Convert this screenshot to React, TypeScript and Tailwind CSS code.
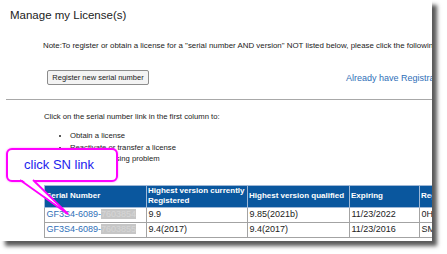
import React from 'react';

const rows = [
  { sn: 'GF3S4-6089-', hidden: '7603854', reg: '9.9', qual: '9.85(2021b)', exp: '11/23/2022', re: '0HBK' },
  { sn: 'GF3S4-6089-', hidden: '7603855', reg: '9.4(2017)', qual: '9.4(2017)', exp: '11/23/2016', re: 'SMPL' },
];

function Callout() {
  return (
    <div className="absolute left-0 top-0 w-[120px] h-[220px] pointer-events-none">
      <div className="absolute left-[6px] top-[148px] w-[112px] h-[34px] rounded-[6px] border-2 border-[#ff00ff] bg-white flex items-center pl-[16px] shadow-[0_0_2px_rgba(255,0,255,0.5)]">
        <span className="text-[13px] leading-[16px] text-[#2222ee]">click SN link</span>
      </div>
      <svg className="absolute left-0 top-0" width="120" height="220" viewBox="0 0 120 220">
        <polygon points="21,179 32,179 68,214" fill="white" />
        <line x1="20" y1="180" x2="68" y2="214" stroke="#ff00ff" strokeWidth="1.8" />
        <line x1="33" y1="180" x2="68" y2="214" stroke="#ff00ff" strokeWidth="1.8" />
      </svg>
    </div>
  );
}

export default function App() {
  return (
    <div className="w-[447px] h-[254px] bg-white overflow-hidden font-['Liberation_Sans',Arial,sans-serif]">
      <div className="relative w-[432px] h-[241px] bg-white overflow-hidden shadow-[5px_5px_4px_rgba(0,0,0,0.65)] text-[#222]">
        <h1 className="pl-[10px] pt-[7px] text-[11.5px] leading-[16px] text-[#222]">Manage my License(s)</h1>

        <p className="ml-[43px] mt-[18px] text-[7.9px] leading-[10px] whitespace-nowrap">
          Note:To register or obtain a license for a "serial number AND version" NOT listed below, please click the following buttons.
        </p>

        <div className="flex items-center ml-[47px] mt-[19px] h-[15px]">
          <button className="flex-none h-[15px] w-[102px] border border-[#8c8c8c] rounded-[2px] bg-[#f3f3f3] text-[7.5px] leading-[13px] text-[#222]">
            Register new serial number
          </button>
          <a className="flex-none ml-[197px] text-[9px] leading-[12px] text-[#2f6fb8] whitespace-nowrap">
            Already have Registration Code?
          </a>
        </div>

        <div className="ml-[6px] mt-[14px] h-px bg-[#a8a8a8]" />

        <p className="ml-[44px] mt-[12px] text-[7.7px] leading-[10px] whitespace-nowrap">
          Click on the serial number link in the first column to:
        </p>
        <ul className="ml-[70px] mt-[8px] list-disc marker:text-[#222] text-[7.7px] leading-[11.5px] whitespace-nowrap">
          <li>Obtain a license</li>
          <li>Reactivate or transfer a license</li>
          <li>Resolve licensing problem</li>
        </ul>

        <table className="ml-[44px] mt-[20px] table-fixed border-collapse w-[470px]">
          <colgroup>
            <col className="w-[102px]" />
            <col className="w-[101px]" />
            <col className="w-[102px]" />
            <col className="w-[70px]" />
            <col className="w-[95px]" />
          </colgroup>
          <thead>
            <tr className="h-[22px] bg-[#0a579e] text-white text-[8px] leading-[10px] font-bold text-left">
              <th className="pl-[1px] border border-[#9fb8d6] align-middle font-bold">Serial Number</th>
              <th className="pl-[1px] border border-[#9fb8d6] align-middle font-bold">Highest version currently Registered</th>
              <th className="pl-[1px] border border-[#9fb8d6] align-middle font-bold">Highest version qualified</th>
              <th className="pl-[1px] border border-[#9fb8d6] align-middle font-bold">Expiring</th>
              <th className="pl-[1px] border border-[#9fb8d6] align-middle font-bold">Registration Code</th>
            </tr>
          </thead>
          <tbody>
            {rows.map((r) => (
              <tr key={r.hidden} className="h-[15px] text-[9px] leading-[11px] text-[#222]">
                <td className="pl-[1.5px] border border-[#a3a3a3] whitespace-nowrap">
                  <span className="text-[#2f6fb8]">{r.sn}</span>
                  <span className="bg-[#c6c6c6] text-[#d6d6d6]">{r.hidden}</span>
                </td>
                <td className="pl-[1.5px] border border-[#a3a3a3]">{r.reg}</td>
                <td className="pl-[1.5px] border border-[#a3a3a3]">{r.qual}</td>
                <td className="pl-[1.5px] border border-[#a3a3a3]">{r.exp}</td>
                <td className="pl-[1.5px] border border-[#a3a3a3]">{r.re}</td>
              </tr>
            ))}
          </tbody>
        </table>

        <Callout />
      </div>
    </div>
  );
}
